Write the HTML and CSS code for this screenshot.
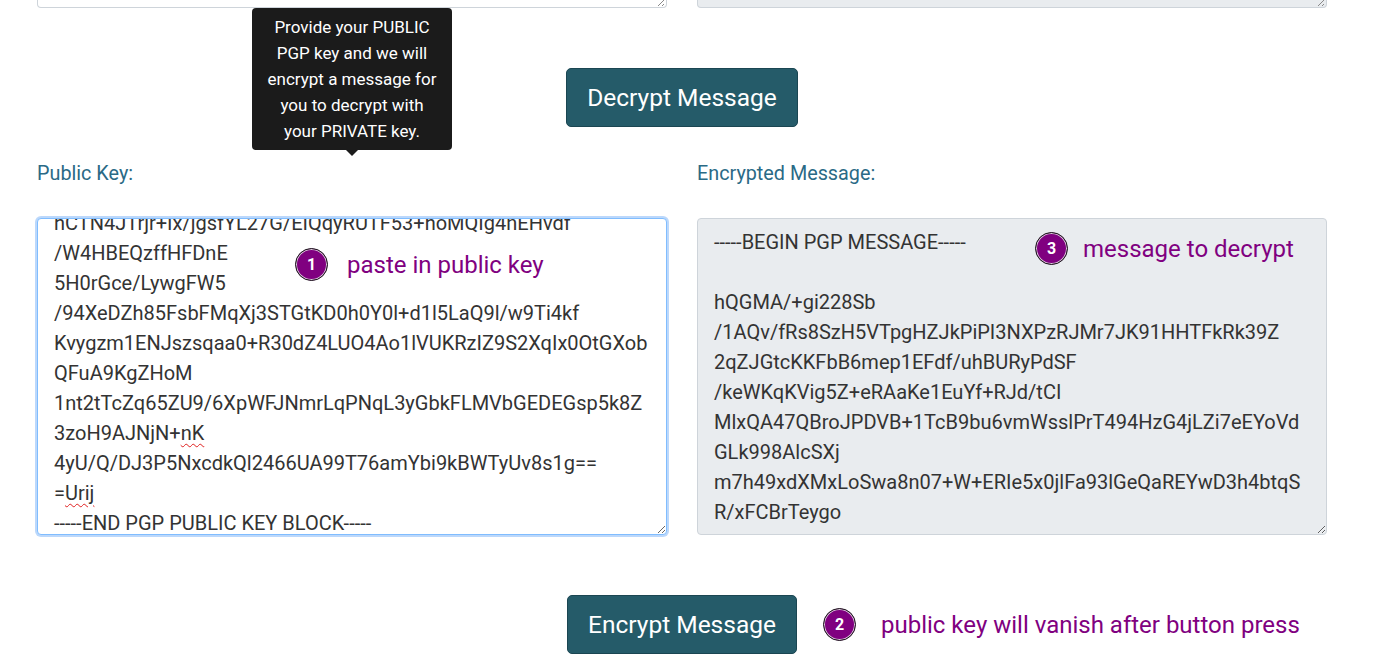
FILE: index.html
```html
<!DOCTYPE html>
<html lang="en">
<head>
<meta charset="utf-8">
<title>PGP Encrypt / Decrypt</title>
<link rel="stylesheet" href="styles.css">
</head>
<body>
<div class="page">
  <div class="row top-row">
    <div class="field"><div class="stub"><span class="grip"></span></div></div>
    <div class="field"><div class="stub readonly"><span class="grip"></span></div></div>
  </div>

  <div class="actions">
    <button class="btn" type="button">Decrypt Message</button>
  </div>

  <div class="row main-row">
    <div class="field">
      <div class="tooltip">Provide your PUBLIC PGP key and we will encrypt a message for you to decrypt with your PRIVATE key.</div>
      <label class="label">Public Key:</label>
      <div class="box focus scrolled">
        <div class="box-text"><div>hCTN4JTrjr+Ix/jgsfYL27G/EIQqyRUTF53+hoMQIg4nEHvdf</div><div>/W4HBEQzffHFDnE</div><div>5H0rGce/LywgFW5</div><div>/94XeDZh85FsbFMqXj3STGtKD0h0Y0l+d1l5LaQ9l/w9Ti4kf</div><div>Kvygzm1ENJszsqaa0+R30dZ4LUO4Ao1lVUKRzIZ9S2XqIx0OtGXob</div><div>QFuA9KgZHoM</div><div>1nt2tTcZq65ZU9/6XpWFJNmrLqPNqL3yGbkFLMVbGEDEGsp5k8Z</div><div>3zoH9AJNjN+<span class="spell">nK</span></div><div>4yU/Q/DJ3P5NxcdkQl2466UA99T76amYbi9kBWTyUv8s1g==</div><div>=<span class="spell">Urij</span></div><div>-----END PGP PUBLIC KEY BLOCK-----</div></div>
        <div class="step step-1"><span class="num">1</span><span class="step-text">paste in public key</span></div>
      </div>
    </div>
    <div class="field">
      <label class="label">Encrypted Message:</label>
      <div class="box readonly">
        <div class="box-text"><div>-----BEGIN PGP MESSAGE-----</div><div>&nbsp;</div><div>hQGMA/+gi228Sb</div><div>/1AQv/fRs8SzH5VTpgHZJkPiPI3NXPzRJMr7JK91HHTFkRk39Z</div><div>2qZJGtcKKFbB6mep1EFdf/uhBURyPdSF</div><div>/keWKqKVig5Z+eRAaKe1EuYf+RJd/tCI</div><div>MlxQA47QBroJPDVB+1TcB9bu6vmWsslPrT494HzG4jLZi7eEYoVd</div><div>GLk998AlcSXj</div><div>m7h49xdXMxLoSwa8n07+W+ERIe5x0jlFa93lGeQaREYwD3h4btqS</div><div>R/xFCBrTeygo</div></div>
        <div class="step step-3"><span class="num">3</span><span class="step-text">message to decrypt</span></div>
      </div>
    </div>
  </div>

  <div class="actions bottom-actions">
    <div class="btn-wrap">
      <button class="btn" type="button">Encrypt Message</button>
      <div class="step step-2"><span class="num">2</span><span class="step-text">public key will vanish after button press</span></div>
    </div>
  </div>
</div>
</body>
</html>
```

FILE: styles.css
```css
* { box-sizing: border-box; }

html, body {
  margin: 0;
  padding: 0;
  background: #ffffff;
  overflow: hidden;
}

body {
  font-family: Roboto, "Noto Sans", sans-serif;
  color: #212529;
}

.page {
  width: 1387px;
  height: 669px;
  padding-left: 37px;
}

.row {
  display: flex;
  gap: 30px;
  width: 1290px;
}

.field {
  position: relative;
  width: 630px;
  flex: none;
}

/* bottom edge of the textareas scrolled above */
.stub {
  position: relative;
  height: 8px;
  border: 1px solid #ced4da;
  border-top: none;
  border-radius: 0 0 4px 4px;
  background: #ffffff;
}
.stub.readonly { background: #e9ecef; }

.grip {
  position: absolute;
  right: 2px;
  bottom: 1px;
  width: 9px;
  height: 9px;
  background: repeating-linear-gradient(135deg, transparent 0 2px, #8a8a8a 2px 3px);
  clip-path: polygon(100% 0, 100% 100%, 0 100%);
}

.actions {
  display: flex;
  justify-content: center;
  width: 1290px;
  margin-top: 60px;
}

.btn {
  height: 59px;
  padding: 0 20px;
  border: 1px solid #1b4652;
  border-radius: 5px;
  background: #255b69;
  color: #ffffff;
  font-family: Roboto, "Noto Sans", sans-serif;
  font-size: 24.5px;
  cursor: pointer;
}

.main-row {
  padding-top: 33px;
}

.label {
  display: block;
  height: 27px;
  margin-bottom: 31px;
  font-size: 19.8px;
  line-height: 27px;
  color: #2a6a86;
}

.box {
  position: relative;
  height: 317px;
  border: 1px solid #ced4da;
  border-radius: 4px;
  background: #ffffff;
  overflow: hidden;
  resize: vertical;
  display: flex;
  flex-direction: column;
}
.box.readonly { background: #e9ecef; }
.box.focus {
  border-color: #80bdff;
  box-shadow: 0 0 0 2px #bcd8fb;
}
.box.scrolled {
  justify-content: flex-end;
}

.box-text {
  flex: none;
  padding: 8px 16px 0;
  font-size: 20px;
  line-height: 30px;
  color: #333333;
  white-space: pre;
}
.box.scrolled .box-text {
  padding-bottom: 0;
  margin-bottom: -4px;
}

.spell {
  text-decoration: underline wavy #e02020;
  text-decoration-thickness: 1px;
  text-underline-offset: 3px;
}

.step {
  position: absolute;
  display: flex;
  align-items: center;
  gap: 20px;
  white-space: nowrap;
}
.num {
  width: 33px;
  height: 33px;
  border-radius: 50%;
  background: #800080;
  border: 1px solid #1a1a1a;
  box-shadow: inset 0 0 0 1px #d8c8d8;
  color: #ffffff;
  font-size: 16px;
  font-weight: 700;
  display: flex;
  align-items: center;
  justify-content: center;
}
.step-text {
  font-size: 24px;
  color: #800080;
}
.step-1 { left: 257px; top: 29px; gap: 19px; }
.step-3 { left: 337px; top: 13px; gap: 15px; }

.btn-wrap { position: relative; }
.step-2 { left: calc(100% + 26px); top: 13px; gap: 25px; }

.tooltip {
  position: absolute;
  left: 215px;
  top: -152px;
  width: 200px;
  padding: 6px 10px;
  background: #1b1b1b;
  color: #ffffff;
  border-radius: 4px;
  font-size: 17px;
  line-height: 26px;
  text-align: center;
  z-index: 5;
}
.tooltip::after {
  content: "";
  position: absolute;
  left: 50%;
  bottom: -6px;
  margin-left: -6px;
  border-left: 6px solid transparent;
  border-right: 6px solid transparent;
  border-top: 6px solid #1b1b1b;
}
```
